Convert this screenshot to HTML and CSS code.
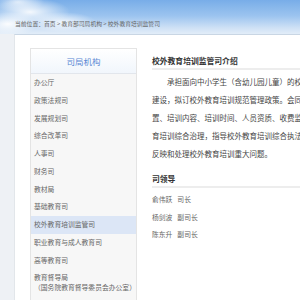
FILE: index.html
```html
<!DOCTYPE html>
<html lang="zh">
<head>
    <meta charset="UTF-8">
    <meta name="viewport" content="width=device-width, initial-scale=1.0">
    <title>校外教育培训监管司</title>
    <link rel="stylesheet" href="styles.css">
</head>
<body>
    <div class="page">
        <div class="top">
            <div class="crumb">当前位置：首页 &gt; 教育部司局机构 &gt; 校外教育培训监管司</div>
        </div>
        <div class="main">
            <div class="side">
                <div class="side-title">司局机构</div>
                <ul class="side-list">
                    <li>办公厅</li>
                    <li>政策法规司</li>
                    <li>发展规划司</li>
                    <li>综合改革司</li>
                    <li>人事司</li>
                    <li>财务司</li>
                    <li>教材局</li>
                    <li>基础教育司</li>
                    <li class="active">校外教育培训监管司</li>
                    <li>职业教育与成人教育司</li>
                    <li>高等教育司</li>
                    <li class="two-line">教育督导局<br>（国务院教育督导委员会办公室）</li>
                </ul>
            </div>
            <div class="content">
                <h2 class="section-title">校外教育培训监管司介绍</h2>
                <p class="intro">承担面向中小学生（含幼儿园儿童）的校外培训（线上线下）监管工作，指导校外培训机构党的<br>建设，拟订校外教育培训规范管理政策。会同有关方面拟订校外培训机构设置标准、审批办法，规范设<br>置、培训内容、培训时间、人员资质、收费监管等。指导查处违法违规培训行为，推进校外教<br>育培训综合治理，指导校外教育培训综合执法工作，受理违规培训问题的举报，<br>反映和处理校外教育培训重大问题。</p>

                <h2 class="section-title leaders-title">司领导</h2>
                <div class="leaders">
                    <div class="leader"><span class="name">俞伟跃</span>司长</div>
                    <div class="leader"><span class="name">杨剑波</span>副司长</div>
                    <div class="leader"><span class="name">陈东升</span>副司长</div>
                </div>
            </div>
        </div>
    </div>
</body>
</html>
```

FILE: styles.css
```css
* {
    margin: 0;
    padding: 0;
    box-sizing: border-box;
}

html, body {
    height: 100%;
}

body {
    font-family: "Noto Sans CJK SC", "Liberation Sans", sans-serif;
    background: #eef1f5;
    color: #555;
    overflow: hidden;
}

.page {
    width: 300px;
    height: 300px;
    overflow: hidden;
}

.top {
    height: 34px;
    padding: 20px 0 0 15px;
    background:
        radial-gradient(ellipse 40px 14px at 30px 12px, rgba(255, 255, 255, 0.9), rgba(255, 255, 255, 0) 100%),
        radial-gradient(ellipse 30px 12px at 8px 24px, rgba(255, 255, 255, 0.95), rgba(255, 255, 255, 0) 100%),
        radial-gradient(ellipse 34px 10px at 62px 22px, rgba(255, 255, 255, 0.8), rgba(255, 255, 255, 0) 100%),
        radial-gradient(ellipse 26px 10px at 18px 2px, rgba(255, 255, 255, 0.7), rgba(255, 255, 255, 0) 100%),
        linear-gradient(to bottom, #78ade8 0, #9cc4ef 16px, #cfe1f5 28px, #e2edf8 34px);
}

.crumb {
    font-size: 5.8px;
    line-height: 8px;
    color: #666;
    white-space: nowrap;
}

.main {
    display: flex;
    gap: 15px;
    margin-left: 14px;
    height: 266px;
    padding: 13px 0 0 15px;
    background: #fff;
    border-top: 1px solid #c9d6e4;
    border-left: 1px solid #e2e6ea;
}

.side {
    flex: 0 0 104px;
    align-self: flex-start;
    background: #f7f7f7;
    border: 1px solid #e4e4e4;
    border-bottom: none;
    height: 260px;
}

.side-title {
    height: 25px;
    line-height: 24px;
    text-align: center;
    font-size: 8.5px;
    color: #5a88d4;
    background: linear-gradient(to bottom, #ffffff, #f1f6fc);
    border-bottom: 1px solid #e2e6ec;
}

.side-list {
    list-style: none;
}

.side-list li {
    height: 17.75px;
    line-height: 17.75px;
    padding-left: 3px;
    font-size: 6.8px;
    color: #666;
    white-space: nowrap;
}

.side-list li.active {
    background: #dce6f6;
}

.side-list li.two-line {
    height: auto;
    line-height: 9.5px;
    padding-top: 4px;
}

.content {
    flex: 1;
    min-width: 0;
    margin-right: -200px;
}

.section-title {
    margin-top: 5px;
    height: 17px;
    line-height: 16px;
    font-size: 7.8px;
    font-weight: bold;
    color: #333;
    border-bottom: 2px solid #ededed;
}

.intro {
    margin-top: 3px;
    font-size: 7.5px;
    line-height: 18.1px;
    color: #444;
    text-indent: 2em;
    white-space: nowrap;
}

.leaders-title {
    margin-top: 8px;
}

.leaders {
    margin-top: 3px;
}

.leader {
    height: 17.2px;
    line-height: 17.2px;
    font-size: 6.8px;
    color: #666;
}

.leader .name {
    margin-right: 5px;
}
```
